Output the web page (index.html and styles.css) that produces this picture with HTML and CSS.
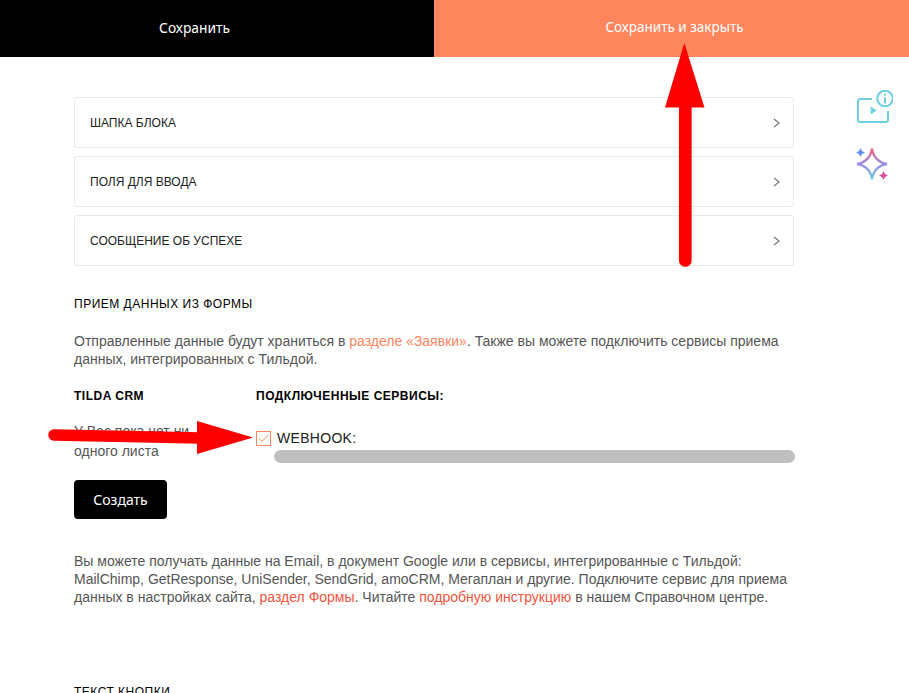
FILE: index.html
```html
<!DOCTYPE html>
<html lang="ru">
<head>
    <meta charset="UTF-8">
    <title>Настройки формы</title>
    <link rel="stylesheet" href="styles.css">
</head>
<body>
    <header class="topbar">
        <a class="save-btn" href="#">Сохранить</a>
        <a class="save-close-btn" href="#">Сохранить и закрыть</a>
    </header>

    <main class="content">
        <div class="accordion">
            <div class="accordion-row">
                <span>ШАПКА БЛОКА</span>
                <svg class="chevron" width="8" height="10" viewBox="0 0 8 10"><path d="M2 1l5 4-5 4" /></svg>
            </div>
            <div class="accordion-row">
                <span>ПОЛЯ ДЛЯ ВВОДА</span>
                <svg class="chevron" width="8" height="10" viewBox="0 0 8 10"><path d="M2 1l5 4-5 4" /></svg>
            </div>
            <div class="accordion-row">
                <span>СООБЩЕНИЕ ОБ УСПЕХЕ</span>
                <svg class="chevron" width="8" height="10" viewBox="0 0 8 10"><path d="M2 1l5 4-5 4" /></svg>
            </div>
        </div>

        <h3 class="section-title">ПРИЕМ ДАННЫХ ИЗ ФОРМЫ</h3>
        <p class="note intro">Отправленные данные будут храниться в <a class="link-orange" href="#">разделе «Заявки»</a>. Также вы можете подключить сервисы приема данных, интегрированных с Тильдой.</p>

        <div class="columns">
            <div class="col-crm">
                <h4 class="col-title">TILDA CRM</h4>
                <p class="crm-empty">У Вас пока нет ни одного листа</p>
                <a class="create-btn" href="#">Создать</a>
            </div>
            <div class="col-services">
                <h4 class="col-title">ПОДКЛЮЧЕННЫЕ СЕРВИСЫ:</h4>
                <div class="service">
                    <span class="checkbox">
                        <svg width="11" height="9" viewBox="0 0 11 9"><path d="M1 4.500l3 3 6-6.500" /></svg>
                    </span>
                    <span class="service-name">WEBHOOK:</span>
                </div>
                <div class="redacted"></div>
            </div>
        </div>

        <p class="note outro">Вы можете получать данные на Email, в документ Google или в сервисы, интегрированные с Тильдой: MailChimp, GetResponse, UniSender, SendGrid, amoCRM, Мегаплан и другие. Подключите сервис для приема данных в настройках сайта, <a class="link-red" href="#">раздел Формы</a>. Читайте <a class="link-red" href="#">подробную инструкцию</a> в нашем Справочном центре.</p>

        <h3 class="section-title button-text">ТЕКСТ КНОПКИ</h3>
    </main>

    <!-- floating help icons -->
    <svg class="side-icon video-icon" width="36" height="36" viewBox="0 0 36 36">
        <path class="video-frame" d="M15 9H4a3 3 0 0 0-3 3v18a2 2 0 0 0 2 2h26a2 2 0 0 0 2-2v-9" />
        <path class="video-play" d="M13.700 16.500l6 4-6 4z" />
        <circle class="video-frame" cx="28" cy="8.500" r="7.700" />
        <path class="video-frame" d="M28 7.500v6M28 3.500v2" />
    </svg>
    <svg class="side-icon spark-icon" width="34" height="34" viewBox="0 0 34 34">
        <defs>
            <linearGradient id="sparkGrad" x1="0" y1="0" x2="0" y2="1">
                <stop offset="0" stop-color="#f2606e" />
                <stop offset="0.5" stop-color="#9d8ce6" />
                <stop offset="1" stop-color="#6fd0e3" />
            </linearGradient>
        </defs>
        <path class="spark-main" d="M17 1.500c.8 8 7 14.700 15 15.500-8 .8-14.200 7-15 15.500-.8-8.500-7-14.700-15-15.500 8-.8 14.200-7.500 15-15.500z" />
        <path fill="#6a8fee" d="M5.500 1Q6.500 4.500 10 5.500 6.500 6.500 5.500 10 4.500 6.500 1 5.500 4.500 4.500 5.500 1z" />
        <path fill="#d9549f" d="M28.500 24Q29.500 27.500 33 28.500 29.500 29.500 28.500 33 27.500 29.500 24 28.500 27.500 27.500 28.500 24z" />
    </svg>

    <!-- red annotation arrows drawn over the page -->
    <svg class="annotations" width="909" height="693" viewBox="0 0 909 693">
        <path class="arrow-shaft up" d="M685.300 100V260.500" />
        <path class="arrow-head" d="M684.300 43L704.500 107.500H665z" />
        <path class="arrow-shaft" d="M54 435L200 438" />
        <path class="arrow-head" d="M253 437.500L197 421V454z" />
    </svg>
</body>
</html>
```
FILE: styles.css
```css
* {
    margin: 0;
    padding: 0;
    box-sizing: border-box;
}

html, body {
    height: 693px;
    overflow: hidden;
}

body {
    position: relative;
    background-color: #fff;
    font-family: "Liberation Sans", Arial, sans-serif;
    color: #333;
}

a {
    text-decoration: none;
}

.topbar {
    display: flex;
    height: 57px;
}

.save-btn, .save-close-btn {
    display: flex;
    align-items: center;
    justify-content: center;
    color: #fff;
    font-family: "Noto Sans", sans-serif;
    padding-bottom: 3px;
}

.save-btn {
    width: 434px;
    padding-right: 45px;
    background-color: #000;
    font-size: 13.800px;
}

.save-close-btn {
    flex-grow: 1;
    padding-left: 6px;
    background-color: #ff855d;
    font-size: 13.500px;
}

.content {
    width: 720px;
    margin-left: 74px;
    padding-top: 40px;
}

.accordion {
    display: flex;
    flex-direction: column;
    gap: 8px;
}

.accordion-row {
    display: flex;
    align-items: center;
    justify-content: space-between;
    height: 51px;
    padding: 0 13px 0 15px;
    border: 1px solid #e9e9e9;
    border-radius: 3px;
    font-size: 12px;
    color: #222;
}

.chevron path {
    fill: none;
    stroke: #777;
    stroke-width: 1.200;
}

.section-title {
    font-size: 12px;
    font-weight: normal;
    letter-spacing: 0.5px;
    color: #000;
    line-height: 16px;
}

.accordion + .section-title {
    margin-top: 30px;
}

.note {
    font-size: 14px;
    line-height: 18px;
    color: #555;
}

.intro {
    margin-top: 20px;
}

.link-orange {
    color: #ff855d;
}

.link-red {
    color: #f4533d;
}

.columns {
    display: flex;
    margin-top: 20px;
}

.col-crm {
    flex-shrink: 0;
    width: 182px;
}

.col-services {
    flex-grow: 1;
}

.col-title {
    font-size: 12px;
    line-height: 16px;
    font-weight: bold;
    letter-spacing: 0.5px;
    color: #000;
}

.crm-empty {
    width: 125px;
    margin-top: 17px;
    font-size: 14px;
    line-height: 20px;
    color: #555;
}

.create-btn {
    display: flex;
    align-items: center;
    justify-content: center;
    width: 93px;
    height: 39px;
    margin-top: 19px;
    border-radius: 4px;
    background-color: #000;
    color: #fff;
    font-family: "Noto Sans", sans-serif;
    font-size: 14px;
}

.service {
    display: flex;
    align-items: center;
    gap: 6px;
    margin-top: 26px;
}

.checkbox {
    display: flex;
    align-items: center;
    justify-content: center;
    width: 15px;
    height: 15px;
    border: 1px solid #ff855d;
}

.checkbox path {
    fill: none;
    stroke: #ff855d;
    stroke-width: 1;
}

.service-name {
    font-size: 14px;
    letter-spacing: 0.3px;
    color: #222;
}

.redacted {
    width: 521px;
    height: 13px;
    margin: 4px 0 0 18px;
    border-radius: 7px;
    background-color: #bfbfbf;
}

.outro {
    margin-top: 33px;
}

.button-text {
    margin-top: 78px;
}

.side-icon {
    position: absolute;
}

.video-icon {
    left: 857px;
    top: 90px;
}

.spark-icon {
    left: 855px;
    top: 147px;
}

.video-frame {
    fill: none;
    stroke: #6fd0e3;
    stroke-width: 2;
}

.video-play {
    fill: #6fd0e3;
}

.spark-main {
    fill: none;
    stroke: url(#sparkGrad);
    stroke-width: 2.400;
}

.annotations {
    position: absolute;
    left: 0;
    top: 0;
    pointer-events: none;
}

.arrow-shaft {
    fill: none;
    stroke: #f00;
    stroke-width: 11.500;
    stroke-linecap: round;
}

.arrow-shaft.up {
    stroke-width: 12.700;
}

.arrow-head {
    fill: #f00;
}
```
